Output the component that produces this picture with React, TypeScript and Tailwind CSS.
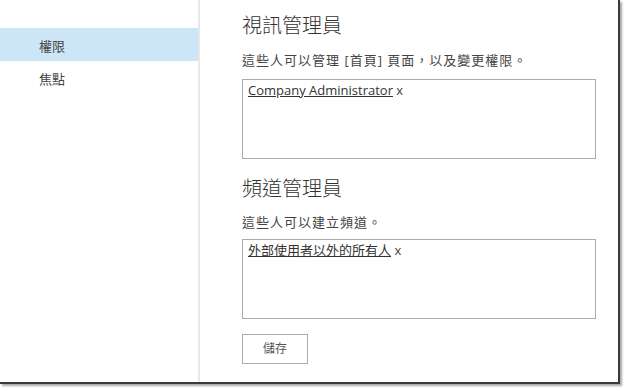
export default function App() {
  const font = { fontFamily: '"Segoe UI", "Open Sans", "Noto Sans CJK TC", sans-serif' }
  return (
    <div className="w-[624px] h-[388px] bg-white overflow-hidden text-[#444]" style={font}>
      <div className="flex w-[620px] h-[384px] bg-white border-r-2 border-b-2 border-[#3a3a3a] shadow-[2px_2px_2px_rgba(0,0,0,0.35)]">
        {/* Sidebar */}
        <div className="w-[200px] shrink-0 border-r-2 border-[#e8e8e8] pt-[28px]">
          <div className="h-[33px] bg-[#cde6f7] flex items-center pl-[39px] pt-[4px] text-[13px]">權限</div>
          <div className="h-[33px] flex items-center pl-[39px] pt-[4px] text-[13px]">焦點</div>
        </div>

        {/* Main */}
        <div className="flex-1 pl-[42px] pt-[12px]">
          <h2 className="text-[20px] font-light leading-[28px] text-[#333]">視訊管理員</h2>
          <p className="text-[13px] tracking-[1px] leading-[17px] mt-[12px]">這些人可以管理 [首頁] 頁面，以及變更權限。</p>
          <div className="mt-[10px] w-[354px] h-[80px] border border-[#ababab] px-[5px] pt-[1px] text-[13px] leading-[18px]">
            <span className="underline text-[#333]">Company Administrator</span> x
          </div>

          <h2 className="mt-[16px] text-[20px] font-light leading-[28px] text-[#333]">頻道管理員</h2>
          <p className="text-[13px] tracking-[1px] leading-[17px] mt-[11px]">這些人可以建立頻道。</p>
          <div className="mt-[8px] w-[354px] h-[80px] border border-[#ababab] px-[5px] pt-[1px] text-[13px] leading-[18px]">
            <span className="underline text-[#333]">外部使用者以外的所有人</span> x
          </div>

          <button className="mt-[15px] w-[66px] h-[30px] border border-[#ababab] bg-white text-[12px] text-[#555]">儲存</button>
        </div>
      </div>
    </div>
  )
}
